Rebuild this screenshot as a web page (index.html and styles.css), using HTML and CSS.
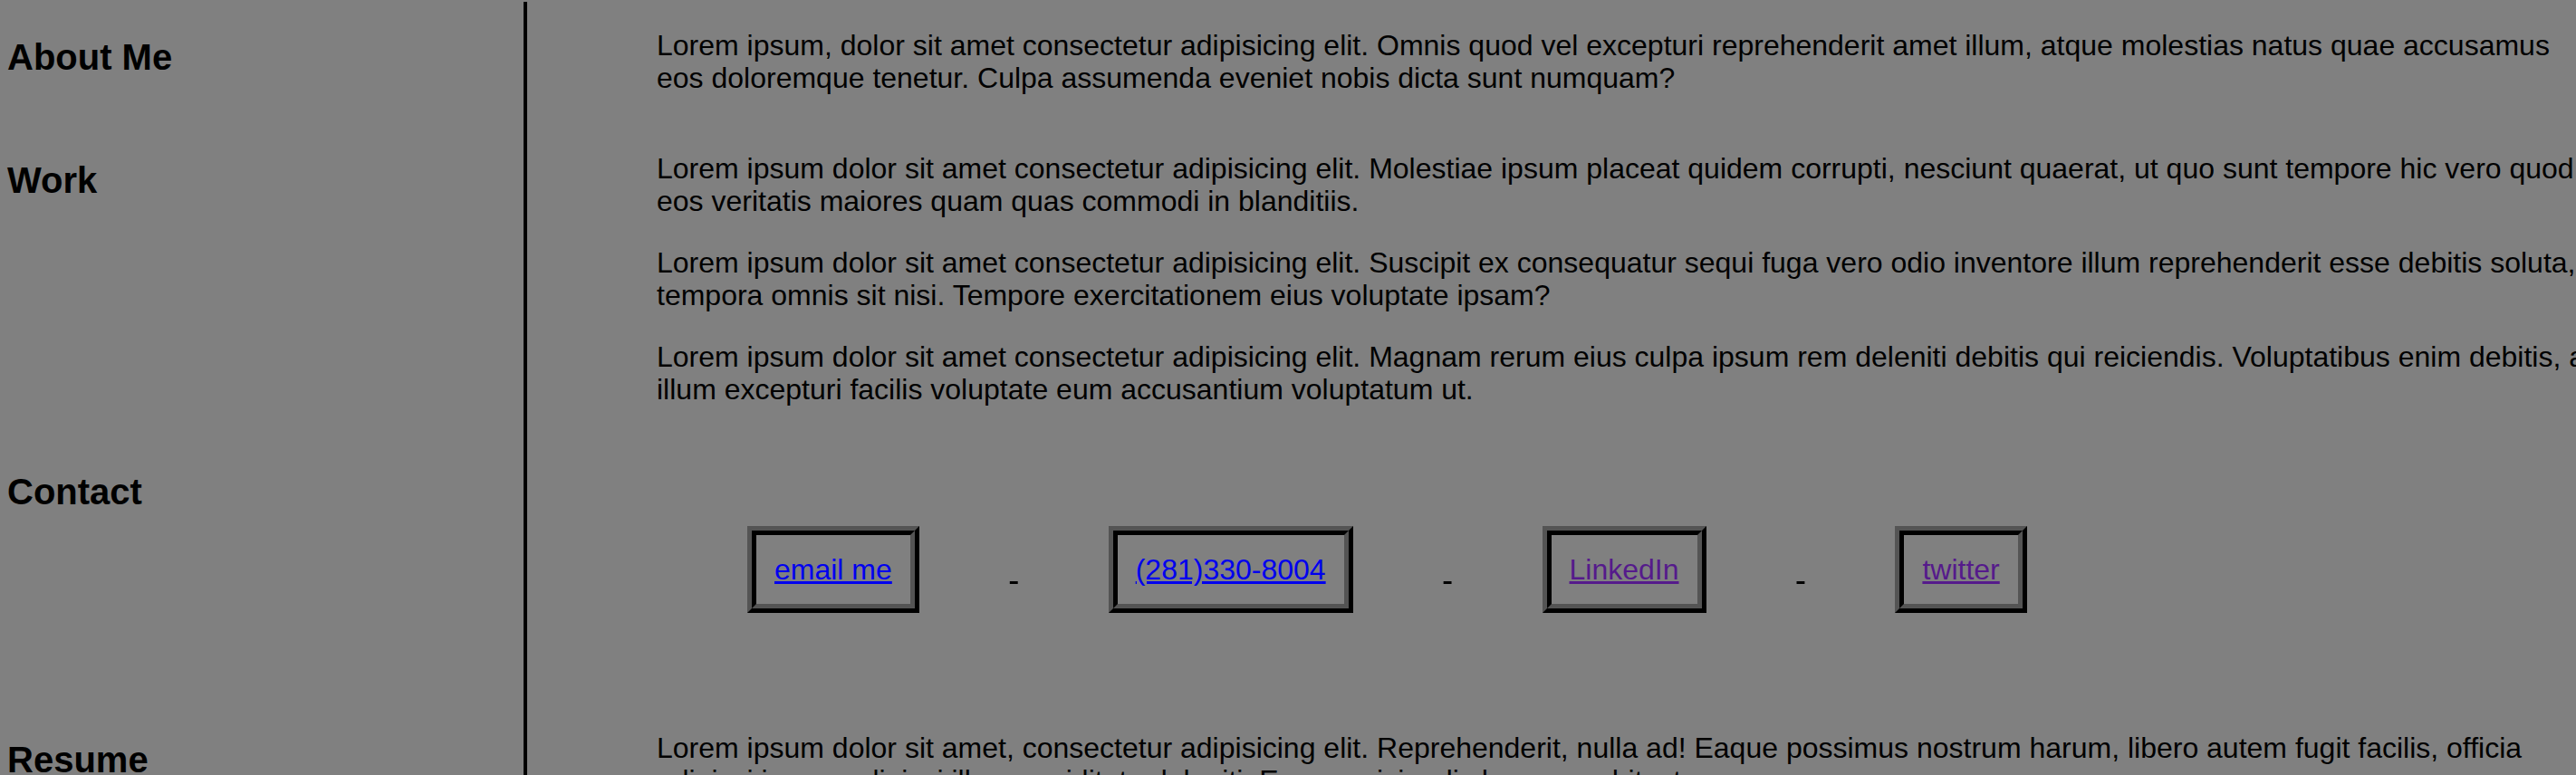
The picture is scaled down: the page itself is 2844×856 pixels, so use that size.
FILE: index.html
```html
<!DOCTYPE html>
<html lang="en">
<head>
<meta charset="utf-8">
<title>Portfolio</title>
<link rel="stylesheet" href="styles.css">
</head>
<body>
<main class="page">
  <section class="row">
    <div class="side"><h2 class="label">About Me</h2></div>
    <div class="content">
      <p>Lorem ipsum, dolor sit amet consectetur adipisicing elit. Omnis quod vel excepturi reprehenderit amet illum, atque molestias natus quae accusamus eos doloremque tenetur. Culpa assumenda eveniet nobis dicta sunt numquam?</p>
    </div>
  </section>
  <section class="row">
    <div class="side"><h2 class="label">Work</h2></div>
    <div class="content">
      <p>Lorem ipsum dolor sit amet consectetur adipisicing elit. Molestiae ipsum placeat quidem corrupti, nesciunt quaerat, ut quo sunt tempore hic vero quod eos veritatis maiores quam quas commodi in blanditiis.</p>
      <p>Lorem ipsum dolor sit amet consectetur adipisicing elit. Suscipit ex consequatur sequi fuga vero odio inventore illum reprehenderit esse debitis soluta, tempora omnis sit nisi. Tempore exercitationem eius voluptate ipsam?</p>
      <p>Lorem ipsum dolor sit amet consectetur adipisicing elit. Magnam rerum eius culpa ipsum rem deleniti debitis qui reiciendis. Voluptatibus enim debitis, a illum excepturi facilis voluptate eum accusantium voluptatum ut.</p>
    </div>
  </section>
  <section class="row">
    <div class="side"><h2 class="label">Contact</h2></div>
    <div class="content contact">
      <div class="links">
        <a class="btn" href="#email">email me</a>
        <span class="sep">&nbsp;</span>
        <a class="btn" href="#phone">(281)330-8004</a>
        <span class="sep">&nbsp;</span>
        <a class="btn visited" href="#linkedin">LinkedIn</a>
        <span class="sep">&nbsp;</span>
        <a class="btn visited" href="#twitter">twitter</a>
      </div>
    </div>
  </section>
  <section class="row">
    <div class="side"><h2 class="label">Resume</h2></div>
    <div class="content">
      <p>Lorem ipsum dolor sit amet, consectetur adipisicing elit. Reprehenderit, nulla ad! Eaque possimus nostrum harum, libero autem fugit facilis, officia adipisci ipsum adipisci illum cupiditate deleniti. Eaque reiciendis harum architecto.</p>
    </div>
  </section>
</main>
</body>
</html>
```
FILE: styles.css
```css
html {
  overflow: hidden;
  background: #808080;
}
body {
  margin: 0;
  background: #808080;
  color: #000;
  font-family: "Liberation Sans", Arial, sans-serif;
}
.page {
  display: flex;
  flex-direction: column;
  width: 2865px;
  padding-top: 2px;
}
.row {
  display: grid;
  grid-template-columns: 582px 2283px;
}
.row:first-child .label {
  margin-top: 38px;
}
.row:first-child .content p:first-child {
  margin-top: 30px;
}
.side {
  box-sizing: border-box;
  border-right: 4px solid #000;
  padding-left: 8px;
}
.label {
  margin: 40px 0 0;
  font-size: 40px;
  line-height: 46px;
  font-weight: bold;
}
.content {
  padding-left: 143px;
}
.content p {
  margin: 32px 0;
  font-size: 32px;
  line-height: 36px;
}
.contact {
  padding-top: 101px;
  padding-bottom: 99px;
}
.links {
  display: flex;
  align-items: baseline;
  gap: 100px;
  padding-left: 100px;
  font-size: 32px;
  line-height: 36px;
}
.btn {
  display: inline-block;
  border: 10px ridge #000;
  padding: 20px;
  color: #0000ee;
  text-decoration: underline;
}
.btn.visited {
  color: #551a8b;
}
.sep {
  text-decoration: underline;
  color: #000;
}
```
